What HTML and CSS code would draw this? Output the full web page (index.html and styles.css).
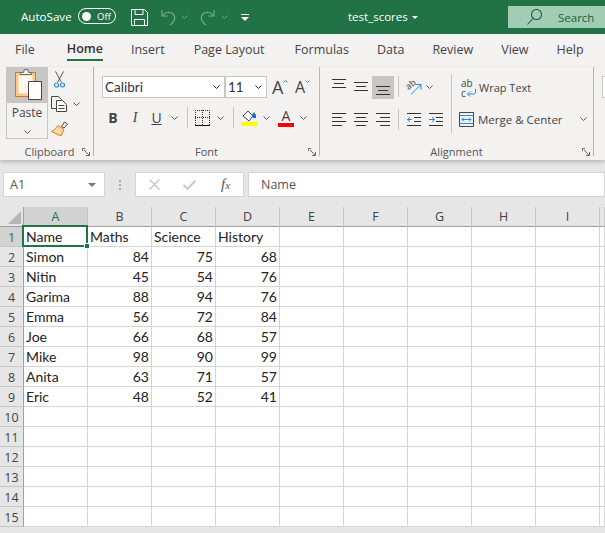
FILE: index.html
```html
<!DOCTYPE html>
<html lang="en">
<head>
    <meta charset="UTF-8">
    <meta name="viewport" content="width=device-width, initial-scale=1.0">
    <title>test_scores - Excel</title>
    <link rel="stylesheet" href="styles.css">
</head>
<body>

    <!-- title bar -->
    <header class="titlebar">
        <span class="autosave">AutoSave</span>
        <span class="toggle"><i class="knob"></i>Off</span>
        <svg class="qa-save" width="17" height="17" viewBox="0 0 17 17" fill="none" stroke="#fff"><path d="M.5.5h13l3 3v13H.5zM4 .5v5h8v-5M3.500 16.500v-6h10v6"/></svg>
        <svg class="qa-undo" width="15" height="17" viewBox="0 0 15 17" fill="none" stroke="#6ea888" stroke-width="1.200"><path d="M1 1v6h6M1.500 6.500C4 3 9 2.500 12 5c3 3 2 8-3 11"/></svg>
        <svg class="qa-chev" width="7" height="4" viewBox="0 0 7 4" fill="none" stroke="#6ea888"><path d="M.5.500l3 3 3-3"/></svg>
        <svg class="qa-redo" width="15" height="17" viewBox="0 0 15 17" fill="none" stroke="#6ea888" stroke-width="1.200"><path d="M14 1v6H8M13.500 6.500C11 3 6 2.500 3 5c-3 3-2 8 3 11"/></svg>
        <svg class="qa-chev2" width="7" height="4" viewBox="0 0 7 4" fill="none" stroke="#6ea888"><path d="M.5.500l3 3 3-3"/></svg>
        <svg class="qa-more" width="8" height="7" viewBox="0 0 8 7" fill="#fff"><path d="M0 0h8v1H0zM0 3h8L4 7z"/></svg>
        <span class="doc-name">test_scores</span>
        <svg class="doc-caret" width="6" height="3" viewBox="0 0 6 3" fill="#fff"><path d="M0 0h6L3 3z"/></svg>
        <div class="search">
            <svg width="15" height="16" viewBox="0 0 15 16" fill="none" stroke="#1d5c3a" stroke-width="1.100"><circle cx="9.500" cy="5.500" r="5"/><path d="M6 9.500L.5 15.500"/></svg>
            <span>Search</span>
        </div>
    </header>

    <!-- tabs -->
    <nav class="tabs">
        <a class="tab tab-file">File</a>
        <a class="tab tab-home active">Home</a>
        <a class="tab tab-insert">Insert</a>
        <a class="tab tab-layout">Page Layout</a>
        <a class="tab tab-formulas">Formulas</a>
        <a class="tab tab-data">Data</a>
        <a class="tab tab-review">Review</a>
        <a class="tab tab-view">View</a>
        <a class="tab tab-help">Help</a>
    </nav>

    <!-- ribbon -->
    <section class="ribbon">
        <div class="group group-clipboard">
            <div class="group-body clip-body">
                <div class="paste">
                    <div class="paste-top">
                        <svg width="28" height="32" viewBox="0 0 28 32">
                            <path d="M.5 3.500h20v24H.5z" fill="#f8c98a" stroke="#d2761f"/>
                            <path d="M3.500 6.500h14v18h-14z" fill="#fdf6ec"/>
                            <path d="M5.500 5.500v-2h3l1-3h3l1 3h3v2z" fill="#f3f2f1" stroke="#6b6b6b"/>
                            <path d="M13.500 12.500h13v18h-13z" fill="#fff" stroke="#444"/>
                        </svg>
                    </div>
                    <div class="paste-bottom">
                        <span>Paste</span>
                        <svg class="chev" width="7" height="4" viewBox="0 0 7 4"><path d="M.5.500l3 3 3-3"/></svg>
                    </div>
                </div>
                <div class="clip-tools">
                    <svg class="icon-cut" width="11" height="17" viewBox="0 0 11 17" fill="none"><path d="M1.500.500l6 11M9.500.500l-6 11" stroke="#555"/><circle cx="2.500" cy="14" r="2" stroke="#2b88d8" stroke-width="1.200"/><circle cx="8.500" cy="14" r="2" stroke="#2b88d8" stroke-width="1.200"/></svg>
                    <div class="tool-chev">
                        <svg width="17" height="16" viewBox="0 0 17 16" fill="#f3f2f1" stroke="#444"><path d="M.5.500h7l3 3v9H.5z"/><path d="M5.500 4.500h6l4 4v7h-10z" fill="#fff"/><path d="M7.500 9.500h6M7.500 12.500h6" fill="none"/></svg>
                        <svg class="chev" width="7" height="4" viewBox="0 0 7 4"><path d="M.5.500l3 3 3-3"/></svg>
                    </div>
                    <svg class="icon-painter" width="17" height="16" viewBox="0 0 17 16"><path d="M10.500 5.500l3-4.500 3 2-3.500 4z" fill="#fff" stroke="#444"/><path d="M7 4.500l6 4-3 6.500-9.500-4.500 3-2z" fill="#fbd9ad" stroke="#e07b1a"/></svg>
                </div>
            </div>
            <div class="group-label"><span>Clipboard</span><svg class="launcher" width="8" height="8" viewBox="0 0 8 8" fill="none" stroke="#666"><path d="M.5 3V.5H3M2 2l5 5M7.500 4v3.500H4"/></svg></div>
        </div>

        <div class="group group-font">
            <div class="group-body">
                <div class="row font-row1">
                    <div class="combo combo-font"><span>Calibri</span><svg class="chev dark" width="7" height="4" viewBox="0 0 7 4"><path d="M.5.500l3 3 3-3"/></svg></div>
                    <div class="combo combo-size"><span>11</span><svg class="chev dark" width="7" height="4" viewBox="0 0 7 4"><path d="M.5.500l3 3 3-3"/></svg></div>
                    <span class="grow">A<svg width="5" height="3" viewBox="0 0 5 3" fill="none" stroke="#2b88d8"><path d="M.5 2.500l2-2 2 2"/></svg></span>
                    <span class="shrink">A<svg width="5" height="3" viewBox="0 0 5 3" fill="none" stroke="#2b88d8"><path d="M.5.500l2 2 2-2"/></svg></span>
                </div>
                <div class="row font-row2">
                    <span class="fmt fmt-b">B</span>
                    <span class="fmt fmt-i">I</span>
                    <span class="fmt fmt-u">U</span>
                    <svg class="chev chev-u" width="7" height="4" viewBox="0 0 7 4"><path d="M.5.500l3 3 3-3"/></svg>
                    <i class="vsep sep-font"></i>
                    <svg class="icon-border" width="15" height="16" viewBox="0 0 15 16" fill="none"><path d="M0 .5h15M0 7.500h15M.5 0v15M7.500 0v15M14.500 0v15" stroke="#333" stroke-dasharray="1 1"/><path d="M0 15.500h15" stroke="#111"/></svg>
                    <svg class="chev chev-border" width="7" height="4" viewBox="0 0 7 4"><path d="M.5.500l3 3 3-3"/></svg>
                    <i class="vsep sep-font"></i>
                    <svg class="icon-fill" width="16" height="16" viewBox="0 0 16 16"><path d="M2 6l5-5 5 5-4 5z" fill="#fff" stroke="#444"/><path d="M11 5l2-3 2 3v3h-3z" fill="#1f6fb5"/><path d="M0 12h16v4H0z" fill="#ffff00"/></svg>
                    <svg class="chev chev-color" width="7" height="4" viewBox="0 0 7 4"><path d="M.5.500l3 3 3-3"/></svg>
                    <div class="icon-color"><span>A</span><i></i></div>
                    <svg class="chev chev-color" width="7" height="4" viewBox="0 0 7 4"><path d="M.5.500l3 3 3-3"/></svg>
                </div>
            </div>
            <div class="group-label"><span>Font</span><svg class="launcher" width="8" height="8" viewBox="0 0 8 8" fill="none" stroke="#666"><path d="M.5 3V.5H3M2 2l5 5M7.500 4v3.500H4"/></svg></div>
        </div>

        <div class="group group-align">
            <div class="group-body">
                <div class="row align-row1">
                    <div class="al-btn al-top"><svg width="14" height="9" viewBox="0 0 14 9" stroke="#333"><path d="M0 .5h14M2 4.500h10M0 8.500h14"/></svg></div>
                    <div class="al-btn al-mid"><svg width="14" height="9" viewBox="0 0 14 9" stroke="#333"><path d="M0 .5h14M2 4.500h10M0 8.500h14"/></svg></div>
                    <div class="al-btn al-bot"><svg width="14" height="9" viewBox="0 0 14 9" stroke="#333"><path d="M0 .5h14M2 4.500h10M0 8.500h14"/></svg></div>
                    <i class="vsep sep-align"></i>
                    <svg class="icon-orient" width="16" height="16" viewBox="0 0 16 16" fill="none"><text x="1" y="9" font-size="9" fill="#444" transform="rotate(-40 5 8)" class="orient-text">ab</text><path d="M5 15.500l10-10M10 5.500h5v5" stroke="#2b88d8"/></svg>
                    <svg class="chev orient-chev" width="7" height="4" viewBox="0 0 7 4"><path d="M.5.500l3 3 3-3"/></svg>
                    <i class="vsep tall"></i>
                    <div class="wrap-text">
                        <span class="wrap-icon">ab<br>c<svg width="9" height="8" viewBox="0 0 9 8" fill="none" stroke="#2b88d8"><path d="M8.500 0v3.500c0 1-1 1.500-2 1.500H1M3 2.500L.5 5 3 7.500"/></svg></span>
                        <span>Wrap Text</span>
                    </div>
                </div>
                <div class="row align-row2">
                    <div class="al-btn"><svg width="14" height="13" viewBox="0 0 14 13" stroke="#333"><path d="M0 .5h14M0 4.500h10M0 8.500h14M0 12.500h10"/></svg></div>
                    <div class="al-btn"><svg width="14" height="13" viewBox="0 0 14 13" stroke="#333"><path d="M0 .5h14M2 4.500h10M0 8.500h14M2 12.500h10"/></svg></div>
                    <div class="al-btn"><svg width="14" height="13" viewBox="0 0 14 13" stroke="#333"><path d="M0 .5h14M4 4.500h10M0 8.500h14M4 12.500h10"/></svg></div>
                    <i class="vsep sep-align"></i>
                    <svg class="icon-indent" width="14" height="13" viewBox="0 0 14 13" fill="none"><path d="M0 .5h14M7 4.500h7M7 8.500h7M0 12.500h14" stroke="#333"/><path d="M5 6.500H.5M3 4L.5 6.500 3 9" stroke="#2b88d8"/></svg>
                    <svg class="icon-indent" width="14" height="13" viewBox="0 0 14 13" fill="none"><path d="M0 .5h14M7 4.500h7M7 8.500h7M0 12.500h14" stroke="#333"/><path d="M0 6.500h5M3 4l2.500 2.500L3 9" stroke="#2b88d8"/></svg>
                    <i class="vsep tall"></i>
                    <div class="merge">
                        <svg width="15" height="15" viewBox="0 0 15 15" fill="none"><path d="M.5.500h14v14H.5z" stroke="#444"/><path d="M.5 3.500h14M.5 11.500h14" stroke="#2b88d8"/><path d="M3 7.500h9M5 5.500l-2 2 2 2M10 5.500l2 2-2 2" stroke="#2b88d8"/></svg>
                        <span class="merge-label">Merge &amp; Center</span>
                        <svg class="chev" width="7" height="4" viewBox="0 0 7 4"><path d="M.5.500l3 3 3-3"/></svg>
                    </div>
                </div>
            </div>
            <div class="group-label"><span>Alignment</span><svg class="launcher" width="8" height="8" viewBox="0 0 8 8" fill="none" stroke="#666"><path d="M.5 3V.5H3M2 2l5 5M7.500 4v3.500H4"/></svg></div>
        </div>

        <div class="group group-next"><div class="next-box"></div></div>
    </section>

    <!-- formula bar -->
    <div class="formula-bar">
        <div class="name-box"><span>A1</span><svg width="8" height="4" viewBox="0 0 8 4" fill="#777"><path d="M0 0h8L4 4z"/></svg></div>
        <div class="dots"><i></i><i></i><i></i></div>
        <div class="fx-box">
            <svg width="11" height="11" viewBox="0 0 11 11" stroke="#c8c8c8" stroke-width="1.500"><path d="M.5.500l10 10M10.500.500l-10 10"/></svg>
            <svg width="13" height="10" viewBox="0 0 13 10" fill="none" stroke="#c8c8c8" stroke-width="2"><path d="M.5 5l4 4 8-8.500"/></svg>
            <span class="fx"><em>f</em><em class="x">x</em></span>
        </div>
        <div class="formula-input">Name</div>
    </div>

    <!-- sheet -->
    <div class="sheet">
        <div class="corner"><i></i></div>
        <div class="col-head selected">A</div><div class="col-head">B</div><div class="col-head">C</div><div class="col-head">D</div><div class="col-head">E</div><div class="col-head">F</div><div class="col-head">G</div><div class="col-head">H</div><div class="col-head">I</div><div class="col-head"></div>

        <div class="row-head selected">1</div><div class="cell active">Name<i class="cursor"><b></b></i></div><div class="cell">Maths</div><div class="cell">Science</div><div class="cell">History</div><div class="cell"></div><div class="cell"></div><div class="cell"></div><div class="cell"></div><div class="cell"></div><div class="cell"></div>
        <div class="row-head">2</div><div class="cell">Simon</div><div class="cell num">84</div><div class="cell num">75</div><div class="cell num">68</div><div class="cell"></div><div class="cell"></div><div class="cell"></div><div class="cell"></div><div class="cell"></div><div class="cell"></div>
        <div class="row-head">3</div><div class="cell">Nitin</div><div class="cell num">45</div><div class="cell num">54</div><div class="cell num">76</div><div class="cell"></div><div class="cell"></div><div class="cell"></div><div class="cell"></div><div class="cell"></div><div class="cell"></div>
        <div class="row-head">4</div><div class="cell">Garima</div><div class="cell num">88</div><div class="cell num">94</div><div class="cell num">76</div><div class="cell"></div><div class="cell"></div><div class="cell"></div><div class="cell"></div><div class="cell"></div><div class="cell"></div>
        <div class="row-head">5</div><div class="cell">Emma</div><div class="cell num">56</div><div class="cell num">72</div><div class="cell num">84</div><div class="cell"></div><div class="cell"></div><div class="cell"></div><div class="cell"></div><div class="cell"></div><div class="cell"></div>
        <div class="row-head">6</div><div class="cell">Joe</div><div class="cell num">66</div><div class="cell num">68</div><div class="cell num">57</div><div class="cell"></div><div class="cell"></div><div class="cell"></div><div class="cell"></div><div class="cell"></div><div class="cell"></div>
        <div class="row-head">7</div><div class="cell">Mike</div><div class="cell num">98</div><div class="cell num">90</div><div class="cell num">99</div><div class="cell"></div><div class="cell"></div><div class="cell"></div><div class="cell"></div><div class="cell"></div><div class="cell"></div>
        <div class="row-head">8</div><div class="cell">Anita</div><div class="cell num">63</div><div class="cell num">71</div><div class="cell num">57</div><div class="cell"></div><div class="cell"></div><div class="cell"></div><div class="cell"></div><div class="cell"></div><div class="cell"></div>
        <div class="row-head">9</div><div class="cell">Eric</div><div class="cell num">48</div><div class="cell num">52</div><div class="cell num">41</div><div class="cell"></div><div class="cell"></div><div class="cell"></div><div class="cell"></div><div class="cell"></div><div class="cell"></div>
        <div class="row-head">10</div><div class="cell"></div><div class="cell"></div><div class="cell"></div><div class="cell"></div><div class="cell"></div><div class="cell"></div><div class="cell"></div><div class="cell"></div><div class="cell"></div><div class="cell"></div>
        <div class="row-head">11</div><div class="cell"></div><div class="cell"></div><div class="cell"></div><div class="cell"></div><div class="cell"></div><div class="cell"></div><div class="cell"></div><div class="cell"></div><div class="cell"></div><div class="cell"></div>
        <div class="row-head">12</div><div class="cell"></div><div class="cell"></div><div class="cell"></div><div class="cell"></div><div class="cell"></div><div class="cell"></div><div class="cell"></div><div class="cell"></div><div class="cell"></div><div class="cell"></div>
        <div class="row-head">13</div><div class="cell"></div><div class="cell"></div><div class="cell"></div><div class="cell"></div><div class="cell"></div><div class="cell"></div><div class="cell"></div><div class="cell"></div><div class="cell"></div><div class="cell"></div>
        <div class="row-head">14</div><div class="cell"></div><div class="cell"></div><div class="cell"></div><div class="cell"></div><div class="cell"></div><div class="cell"></div><div class="cell"></div><div class="cell"></div><div class="cell"></div><div class="cell"></div>
        <div class="row-head">15</div><div class="cell"></div><div class="cell"></div><div class="cell"></div><div class="cell"></div><div class="cell"></div><div class="cell"></div><div class="cell"></div><div class="cell"></div><div class="cell"></div><div class="cell"></div>
    </div>

</body>
</html>
```

FILE: styles.css
```css
* {
    box-sizing: border-box;
}

html, body {
    height: 100%;
}

body {
    margin: 0;
    font-family: "Open Sans", sans-serif;
    font-size: 12px;
    color: #444;
    background-color: #e6e6e6;
    overflow: hidden;
}

svg {
    display: block;
    flex: none;
}

.chev {
    fill: none;
    stroke: #555;
}

.chev.dark {
    stroke: #222;
}

/* title bar */
.titlebar {
    height: 34px;
    background-color: #217346;
    color: white;
    display: flex;
    align-items: center;
    padding-left: 21px;
}

.autosave {
    flex: none;
    width: 57px;
    margin-bottom: 2px;
    font-size: 11.600px;
}

.toggle {
    flex: none;
    width: 38px;
    height: 16px;
    margin-bottom: 2px;
    border: 1px solid white;
    border-radius: 8px;
    display: flex;
    align-items: center;
    font-size: 9.500px;
    padding-left: 3px;
    gap: 6px;
}

.knob {
    width: 9px;
    height: 9px;
    border-radius: 50%;
    background: white;
}

.qa-save { margin-left: 15px; }
.qa-undo { margin-left: 13px; }
.qa-chev { margin-left: 5px; }
.qa-redo { margin-left: 12px; }
.qa-chev2 { margin-left: 6px; }
.qa-more { margin-left: 13px; }

.doc-name {
    flex: none;
    width: 57px;
    margin-left: 99px;
    margin-bottom: 2px;
    font-size: 11.500px;
    white-space: nowrap;
}

.doc-caret {
    margin-left: 7px;
}

.search {
    flex: none;
    margin-left: 90px;
    width: 97px;
    height: 22px;
    background-color: #a0cdb3;
    color: #1d5c3a;
    display: flex;
    align-items: center;
    gap: 16px;
    padding-left: 19px;
    font-size: 11.500px;
}

/* tabs */
.tabs {
    height: 33px;
    padding-bottom: 2px;
    background-color: #f3f2f1;
    display: flex;
    align-items: center;
    font-size: 12.500px;
    color: #444;
}

.tab { display: block; flex: none; }
.tab-file { margin-left: 15px; }
.tab-home { margin-left: 32px; }
.tab-insert { margin-left: 28px; }
.tab-layout { margin-left: 29px; }
.tab-formulas { margin-left: 30px; }
.tab-data { margin-left: 28px; }
.tab-review { margin-left: 28px; }
.tab-view { margin-left: 28px; }
.tab-help { margin-left: 28px; }

.tab.active {
    font-weight: 600;
    color: #333;
    align-self: flex-start;
    height: 27px;
    line-height: 30px;
    border-bottom: 2px solid #217346;
}

/* ribbon */
.ribbon {
    height: 93px;
    background-color: #f3f2f1;
    display: flex;
    box-shadow: 0 2px 4px rgba(0, 0, 0, 0.2);
    position: relative;
}

.group {
    flex: none;
    display: flex;
    flex-direction: column;
    border-right: 1px solid #b9b7b5;
    margin-bottom: 4px;
}

.group-clipboard { width: 94px; padding-left: 6px; }
.group-font { width: 226px; }
.group-align { width: 274px; }
.group-next { flex: 1; min-width: 0; border: 0; }

.group-body {
    flex: 1;
    min-height: 0;
}

.group-label {
    flex: none;
    height: 20px;
    padding-top: 10px;
    display: flex;
    align-items: center;
    justify-content: center;
    font-size: 11px;
    color: #555;
    position: relative;
}

.launcher {
    position: absolute;
    right: 3px;
    top: 12px;
}

.row {
    display: flex;
    align-items: center;
}

.vsep {
    flex: none;
    width: 1px;
    background-color: #c8c6c4;
    height: 21px;
}

.vsep.tall {
    height: 25px;
    align-self: flex-start;
    margin-left: 18px;
}

/* clipboard */
.clip-body {
    display: flex;
    gap: 3px;
}

.paste {
    width: 42px;
    height: 72px;
    border: 1px solid #c8c6c4;
    border-top: 0;
}

.paste-top {
    height: 36px;
    margin: 0 -1px;
    background-color: #c8c6c4;
    display: flex;
    justify-content: center;
    align-items: center;
    padding-left: 3px;
}

.paste-bottom {
    display: flex;
    flex-direction: column;
    align-items: center;
    gap: 9px;
    padding-top: 1px;
    font-size: 12px;
}

.clip-tools {
    padding-top: 4px;
    display: flex;
    flex-direction: column;
}

.icon-cut { margin-left: 3px; }

.tool-chev {
    display: flex;
    align-items: center;
    gap: 5px;
    margin-top: 8px;
}

.icon-painter { margin-top: 9px; }

/* font */
.font-row1 {
    padding: 9px 0 0 8px;
}

.combo {
    flex: none;
    height: 22px;
    background: white;
    border: 1px solid #c8c6c4;
    display: flex;
    align-items: center;
    justify-content: space-between;
    padding: 0 4px 0 2px;
    font-family: "Lato", sans-serif;
    font-size: 13.500px;
    color: #333;
}

.combo-font { width: 123px; }
.combo-size { width: 42px; }

.grow, .shrink {
    flex: none;
    display: flex;
    line-height: 20px;
    color: #444;
}

.grow { margin-left: 5px; width: 23px; font-size: 18px; }
.shrink { font-size: 16px; width: 18px; }

.grow svg, .shrink svg {
    margin-top: 3px;
}

.font-row2 {
    padding: 9px 0 0 8px;
    height: 30px;
}

.fmt {
    flex: none;
    width: 22px;
    color: #444;
    font-size: 14px;
    text-align: center;
}

.fmt-b { font-weight: 700; }
.fmt-i { font-style: italic; font-family: "Liberation Serif", serif; }
.fmt-u { text-decoration: underline; width: 21px; }

.chev-u { margin-left: 4px; }
.sep-font { margin-left: 9px; }
.icon-border { margin-left: 7px; }
.chev-border { margin-left: 7px; }
.icon-fill { margin-left: 7px; }
.chev-color { margin-left: 6px; }

.icon-color {
    width: 16px;
    margin-left: 8px;
    text-align: center;
    font-size: 14px;
    line-height: 14px;
}

.icon-color i {
    display: block;
    height: 4px;
    background-color: #ff0000;
}

/* alignment */
.align-row1 {
    padding: 7px 0 0 8px;
    height: 32px;
}

.al-btn {
    flex: none;
    width: 22px;
    height: 23px;
    margin-top: 2px;
    display: flex;
    align-items: center;
    justify-content: center;
}

.al-top { align-items: flex-start; padding-top: 3px; }
.al-mid { align-items: flex-start; padding-top: 6px; }
.al-bot { align-items: flex-start; padding-top: 10px; background-color: #c8c6c4; }

.sep-align { margin-left: 4px; }

.orient-text {
    font-family: "Open Sans", sans-serif;
}

.icon-orient { margin-left: 7px; overflow: visible; }
.orient-chev { margin-left: 4px; }

.wrap-text, .merge {
    display: flex;
    align-items: center;
    white-space: nowrap;
}

.wrap-text { margin-left: 9px; padding-top: 2px; gap: 3px; font-size: 11px; }
.merge { margin-left: 7px; gap: 4px; font-size: 11.500px; }

.wrap-icon {
    width: 15px;
    font-size: 10px;
    line-height: 10px;
    position: relative;
    color: #444;
}

.wrap-icon svg {
    position: absolute;
    right: 0;
    bottom: 1px;
}

.align-row2 {
    padding: 4px 0 0 8px;
    height: 36px;
}

.align-row2 .al-btn { margin-top: 0; }
.align-row2 .vsep.tall { height: 34px; margin-top: -4px; margin-left: 8px; }

.icon-indent { margin-left: 8px; }

.merge-label { width: 98px; }

.next-box {
    height: 22px;
    margin: 9px 0 0 8px;
    background: white;
    border: 1px solid #c8c6c4;
    border-right: 0;
}

/* formula bar */
.formula-bar {
    display: flex;
    margin-top: 12px;
    height: 25px;
    padding-left: 3px;
}

.name-box, .fx-box, .formula-input {
    background: white;
    border: 1px solid #d4d4d4;
    display: flex;
    align-items: center;
}

.name-box {
    width: 102px;
    justify-content: space-between;
    padding: 0 8px 0 6px;
    font-size: 12.500px;
    color: #555;
}

.dots {
    width: 30px;
    display: flex;
    flex-direction: column;
    align-items: center;
    justify-content: center;
    gap: 2px;
}

.dots i {
    width: 2px;
    height: 2px;
    background-color: #a8a8a8;
}

.fx-box {
    width: 109px;
    gap: 23px;
    padding-left: 13px;
}

.fx {
    font-family: "Liberation Serif", serif;
    font-size: 15px;
    color: #555;
    margin-left: 2px;
}

.fx .x {
    font-size: 11px;
}

.formula-input {
    flex: 1;
    margin-left: 4px;
    padding-left: 12px;
    font-size: 12.500px;
    color: #555;
}

/* sheet */
.sheet {
    margin-top: 10px;
    display: grid;
    grid-template-columns: 24px repeat(9, 64px) 5px;
    grid-auto-rows: 20px;
    background: white;
    font-family: "Lato", sans-serif;
    font-size: 14px;
    color: #222;
}

.corner, .col-head, .row-head {
    background-color: #e6e6e6;
    display: flex;
    align-items: center;
    justify-content: center;
    font-family: "Open Sans", sans-serif;
    color: #444;
    font-size: 12.500px;
}

.corner {
    border-right: 1px solid #9f9f9f;
    border-bottom: 1px solid #9f9f9f;
    justify-content: flex-end;
    align-items: flex-end;
    padding: 0 2px 2px 0;
}

.corner i {
    width: 13px;
    height: 13px;
    background-color: #b5b5b5;
    clip-path: polygon(100% 0, 100% 100%, 0 100%);
}

.col-head {
    border-right: 1px solid #c6c6c6;
    border-bottom: 1px solid #9f9f9f;
}

.row-head {
    border-right: 1px solid #9f9f9f;
    border-bottom: 1px solid #c6c6c6;
    padding-top: 1px;
}

.col-head.selected {
    background-color: #d2d2d2;
    color: #217346;
    border-bottom-color: #8a9a90;
}

.row-head.selected {
    background-color: #d2d2d2;
    color: #217346;
}

.cell {
    border-right: 1px solid #d4d4d4;
    border-bottom: 1px solid #d4d4d4;
    padding: 0 2px;
    line-height: 20px;
    white-space: nowrap;
}

.cell.num {
    text-align: right;
}

.cell.active {
    position: relative;
}

.cursor {
    position: absolute;
    left: -2px;
    top: -2px;
    width: 66px;
    height: 22px;
    border: 2px solid #217346;
}

.cursor b {
    position: absolute;
    right: -4px;
    bottom: -4px;
    width: 6px;
    height: 6px;
    background-color: #217346;
    border: 1px solid white;
}
```
